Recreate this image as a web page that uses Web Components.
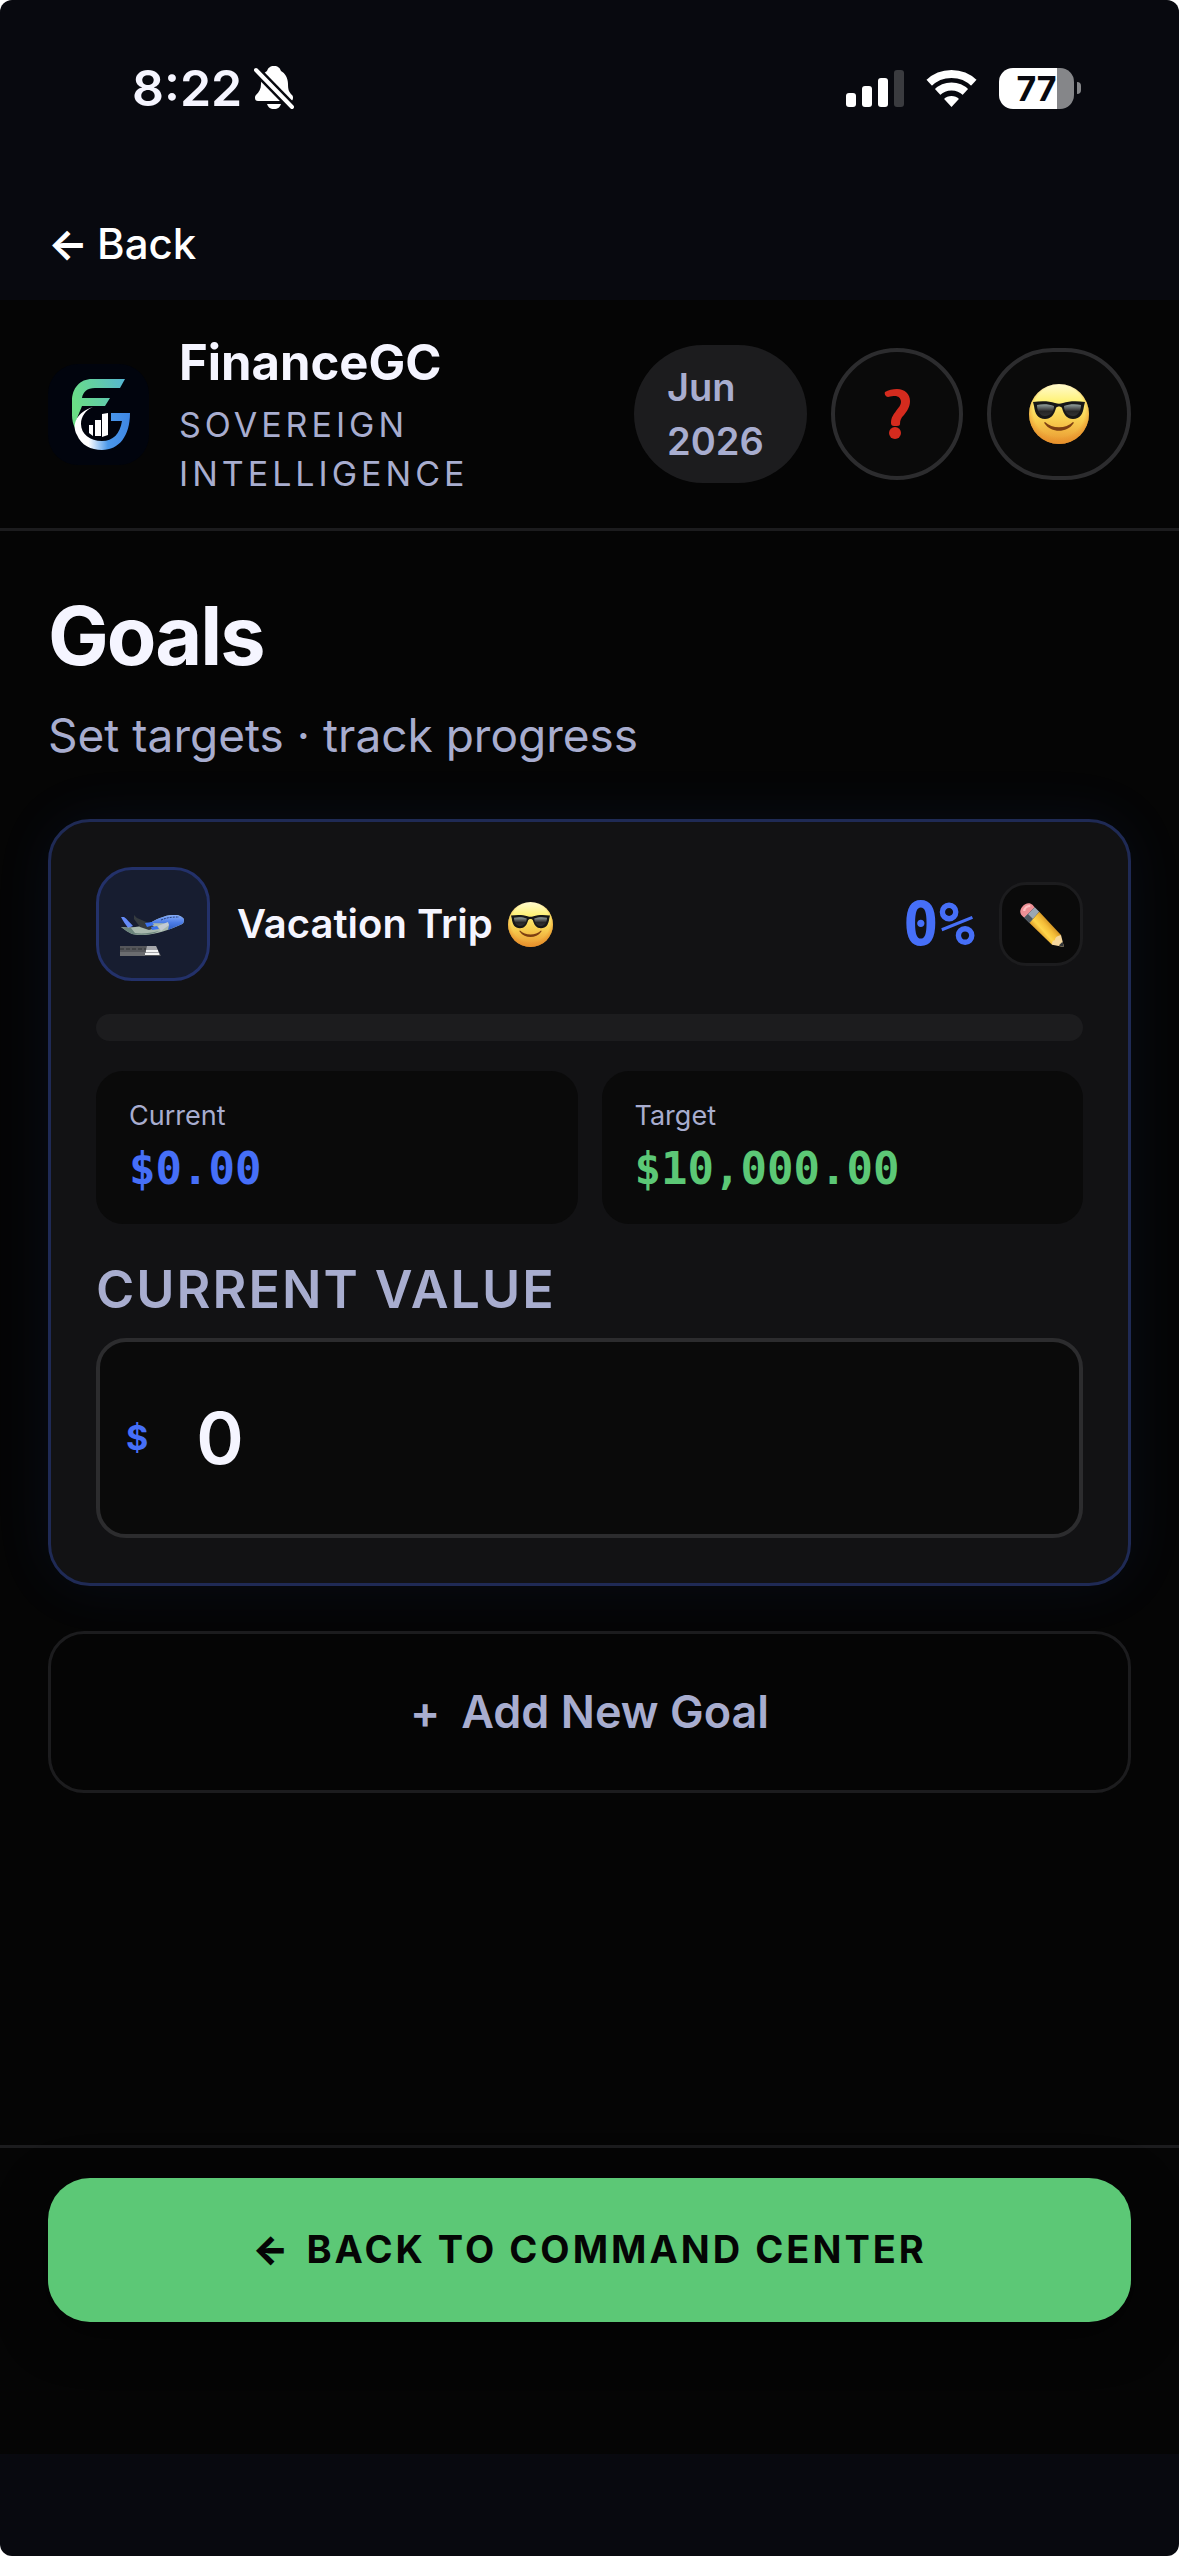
<!DOCTYPE html>
<html lang="en">
<head>
<meta charset="utf-8">
<meta name="viewport" content="width=device-width, initial-scale=1">
<title>FinanceGC - Goals</title>
<style>
  :root {
    --chrome: #08090f;
    --bg: #050505;
    --card: #121214;
    --well: #0a0a0a;
    --line: #1c1c1e;
    --line-strong: #2c2c2e;
    --text: #f5f5ff;
    --muted: #a8adcf;
    --blue: #466ff8;
    --green: #5cc876;
    --mono: "DejaVu Sans Mono", monospace;
  }

  body {
    margin: 0;
    background: #fff;
    color: var(--text);
    font-family: Inter, sans-serif;
  }
</style>
</head>
<body>
<goals-app></goals-app>

<script>
/**
 * Small helper: open shadow root filled from a template
 */
function mount(host, html) {
  const template = document.createElement('template');
  template.innerHTML = html;
  host.attachShadow({ mode: 'open' }).appendChild(template.content.cloneNode(true));
}

/**
 * Emoji drawings
 */
const EMOJI = {
  cool: {
    label: 'Smiling face with sunglasses',
    svg: `
      <svg viewBox="0 0 60 60">
        <defs>
          <linearGradient id="skin" x1="0" y1="0" x2="0" y2="1">
            <stop offset="0" stop-color="#fffbd0"/>
            <stop offset=".28" stop-color="#fff27a"/>
            <stop offset=".6" stop-color="#f8cf50"/>
            <stop offset="1" stop-color="#e9942f"/>
          </linearGradient>
          <radialGradient id="rim" cx=".5" cy=".45" r=".55">
            <stop offset=".78" stop-color="#e8912c" stop-opacity="0"/>
            <stop offset="1" stop-color="#e8912c" stop-opacity=".85"/>
          </radialGradient>
          <linearGradient id="lens" x1="0" y1="0" x2="0" y2="1">
            <stop offset="0" stop-color="#93a09c"/>
            <stop offset=".4" stop-color="#4c4f4f"/>
            <stop offset=".6" stop-color="#262626"/>
            <stop offset="1" stop-color="#333"/>
          </linearGradient>
        </defs>
        <circle cx="30" cy="30" r="30" fill="url(#skin)"/>
        <circle cx="30" cy="30" r="30" fill="url(#rim)"/>
        <path d="M4 18c8-1 16-1 22 1 3 1 5 1 8 0 6-2 14-2 22-1l-1 4c-1 8-4 13-11 13-6 0-9-4-11-11-1-2-5-2-6 0-2 7-5 11-11 11-7 0-10-5-11-13z" fill="#171717"/>
        <path d="M8 21c5-1 12-1 17 1 0 6-4 10-9 10s-8-5-8-11zM52 21c-5-1-12-1-17 1 0 6 4 10 9 10s8-5 8-11z" fill="url(#lens)"/>
        <path d="M16 38c7 7 21 7 28 0 1 0 1 1 0 2-6 9-22 9-28 0-1-1-1-2 0-2z" fill="#7d3f12"/>
      </svg>`
  },
  question: {
    label: 'Question mark',
    svg: `
      <svg viewBox="0 0 60 60">
        <path d="M18 8C21 6 26 5 30 5c8 0 13 5 13 12 0 6-3 10-6 14-3 3-4 5-4 9 0 1-1 2-3 2h-3c-2 0-3-1-3-3 0-6 3-9 5-12 3-4 5-6 5-9 0-4-3-6-6-6-2 0-4 0-7 1-2 0-4-3-3-5z" fill="#d52b1e"/>
        <circle cx="28" cy="49" r="6" fill="#d52b1e"/>
      </svg>`
  },
  pencil: {
    label: 'Pencil',
    svg: `
      <svg viewBox="0 0 60 60">
        <defs>
          <linearGradient id="wood" gradientUnits="userSpaceOnUse" x1="22" y1="36" x2="38" y2="22">
            <stop offset="0" stop-color="#e0a02c"/>
            <stop offset=".3" stop-color="#ffd64b"/>
            <stop offset=".65" stop-color="#f4bd38"/>
            <stop offset="1" stop-color="#cf8f22"/>
          </linearGradient>
        </defs>
        <path d="M2 15C0 9 8 0 15 2c3 1 4 3 6 5L7 21c-2-2-4-3-5-6z" fill="#ee9096"/>
        <path d="M7 12C7 8 11 5 15 5" fill="none" stroke="#ffc0c2" stroke-width="3"/>
        <path d="M7 21 21 7l6 6-13 15z" fill="#9aa7b4"/>
        <path d="M7 21l5-5 7 7-5 5z" fill="#4e5760"/>
        <path d="M14 28 27 13l29 31-12 13z" fill="url(#wood)"/>
        <path d="M44 57c0-4 1-6 4-6 0-4 2-5 8-7l4 16z" fill="#f6d79d"/>
        <path d="M53 58l5-5 2 7z" fill="#33363a"/>
      </svg>`
  },
  plane: {
    label: 'Airplane departure',
    svg: `
      <svg viewBox="0 0 66 42">
        <defs>
          <linearGradient id="hull" x1="0" y1="0" x2="0" y2="1">
            <stop offset="0" stop-color="#86adfb"/>
            <stop offset=".5" stop-color="#4d7de6"/>
            <stop offset="1" stop-color="#2f5ec4"/>
          </linearGradient>
        </defs>
        <path d="M0 32h36l5 10H0z" fill="#55565a"/>
        <path d="M0 38h25v4H0z" fill="#6b6c6f"/>
        <path d="M0 35h26" stroke="#2f3033" stroke-width="1" stroke-dasharray="4 2"/>
        <path d="M27 32h9l4 9H25z" fill="#a5a6aa"/>
        <path d="M26 37h12M25 40h14" stroke="#f4f4f4" stroke-width="2"/>
        <path d="M1 3h3c3 2 6 6 9 9l-5 2c-2-3-5-7-7-11z" fill="#648af7"/>
        <path d="M1 13c8 1 15 0 21-1l8-3c5-3 9-5 13-6 5-2 9-2 13-2 3 0 5 1 8 4 0 4-1 5-4 6-10 5-24 9-35 10-6 0-10 0-13-1-4-2-7-4-11-7z" fill="#a9b9ae"/>
        <path d="M1 13c4 1 7 1 10 1l4 5c8 1 15 0 24-2-4 3-18 5-27 3-4-2-7-4-11-7z" fill="#6c857c"/>
        <path d="M30 9c5-3 9-5 13-6 5-2 9-2 13-2 3 0 5 1 8 4 0 4-1 5-4 6l-12 5 1-5c-5-3-12-1-19-2z" fill="url(#hull)"/>
        <path d="M41 6c7-3 13-3 18-3" fill="none" stroke="#29427e" stroke-width="1" stroke-dasharray="2 1"/>
        <path d="M14 1l3 3 14 6 4 4-6 2-9-3-6-8z" fill="#353b3f"/>
        <path d="M25 9l7-1 2 3-7 2zM31 13l6-1 2 3-7 1z" fill="#3b72ee"/>
        <path d="M38 12l10-4 1 3-8 6z" fill="#c3cbd2"/>
      </svg>`
  }
};

class AppEmoji extends HTMLElement {
  connectedCallback() {
    if (this.shadowRoot) return;
    const item = EMOJI[this.getAttribute('name')];
    mount(this, `
      <style>
        :host { display: inline-block; width: 60px; }
        svg { display: block; width: 100%; height: auto; }
      </style>
      ${item.svg}
    `);
    this.shadowRoot.querySelector('svg').setAttribute('role', 'img');
    this.shadowRoot.querySelector('svg').setAttribute('aria-label', item.label);
  }
}

/**
 * Phone status bar
 */
class StatusBar extends HTMLElement {
  constructor() {
    super();
    mount(this, `
      <style>
        :host {
          display: flex;
          align-items: center;
          justify-content: space-between;
          height: 176px;
          padding: 0 98px 0 132px;
        }
        .group { display: flex; align-items: center; }
        .time { font-size: 50px; font-weight: 600; margin-right: 12px; }
        .right { gap: 22px; }
        svg { display: block; }
        .battery { display: flex; align-items: center; gap: 3px; }
        .cell {
          width: 75px;
          line-height: 41px;
          border-radius: 14px;
          background: linear-gradient(90deg, #fff 58px, #858689 58px);
          color: var(--chrome);
          font-size: 34px;
          font-weight: 700;
          text-align: center;
        }
        .nub {
          width: 4px;
          height: 12px;
          border-radius: 0 4px 4px 0;
          background: #858689;
        }
      </style>
      <div class="group">
        <span class="time">8:22</span>
        <svg width="40" height="44" viewBox="0 0 40 44" role="img" aria-label="Silent">
          <path d="M20 0c4 0 6 2 7 5 4 2 7 7 7 13 0 6 1 8 4 11 1 1 1 2 1 3 0 2-1 3-3 3H4c-2 0-3-1-3-3 0-1 0-2 1-3 3-3 5-6 5-11 0-6 2-11 6-13 1-3 3-5 7-5z" fill="#fff"/>
          <path d="M13 38h14c-1 3-3 5-7 5s-6-2-7-5z" fill="#fff"/>
          <path d="M0 2l40 41" stroke="#08090f" stroke-width="9"/>
          <path d="M2 4l36 37" stroke="#fff" stroke-width="4" stroke-linecap="round"/>
        </svg>
      </div>
      <div class="group right">
        <svg width="58" height="37" viewBox="0 0 58 37" role="img" aria-label="Signal">
          <rect y="23" width="10" height="14" rx="3" fill="#fff"/>
          <rect x="16" y="16" width="10" height="21" rx="3" fill="#fff"/>
          <rect x="32" y="8" width="10" height="29" rx="3" fill="#fff"/>
          <rect x="48" width="10" height="37" rx="3" fill="#3a3b3f"/>
        </svg>
        <svg width="51" height="37" viewBox="0 0 51 37" role="img" aria-label="Wi-Fi">
          <clipPath id="wedge"><path d="M25.500 37L-4 5V-5H55V5z"/></clipPath>
          <g clip-path="url(#wedge)" fill="none" stroke="#fff" stroke-width="8">
            <circle cx="25.500" cy="37" r="33"/>
            <circle cx="25.500" cy="37" r="20.500"/>
            <circle cx="25.500" cy="37" r="11" fill="#fff" stroke="none"/>
          </g>
        </svg>
        <div class="battery"><span class="cell">77</span><span class="nub"></span></div>
      </div>
    `);
  }
}

/**
 * App header: logo, name, month pill and the round buttons
 */
class AppHeader extends HTMLElement {
  constructor() {
    super();
    mount(this, `
      <style>
        :host {
          display: flex;
          align-items: center;
          gap: 24px;
          padding: 30px 48px;
          border-bottom: 3px solid var(--line);
        }
        .logo { flex: none; display: block; border-radius: 30px; }
        .brand { flex: 1; padding-left: 6px; }
        .name { font-size: 49px; line-height: 66px; font-weight: 700; }
        .tag {
          margin-top: 4px;
          color: var(--muted);
          font-size: 34px;
          line-height: 49px;
          letter-spacing: 4px;
        }
        .month {
          box-sizing: border-box;
          width: 173px;
          padding: 15px 33px;
          border-radius: 69px;
          background: var(--line);
          color: var(--muted);
          font-size: 38px;
          line-height: 54px;
          font-weight: 600;
        }
        button {
          box-sizing: border-box;
          display: flex;
          align-items: center;
          justify-content: center;
          height: 132px;
          padding: 0 38px;
          border: 4px solid var(--line-strong);
          border-radius: 66px;
          background: var(--well);
        }
        .help { padding: 0 32px; }
      </style>
      <svg class="logo" width="101" height="101" viewBox="0 0 101 101" role="img" aria-label="FinanceGC logo">
        <defs>
          <linearGradient id="f" x1="0" y1=".4" x2="1" y2="0">
            <stop offset="0" stop-color="#6ade85"/>
            <stop offset=".5" stop-color="#62cda6"/>
            <stop offset="1" stop-color="#55b5d4"/>
          </linearGradient>
          <linearGradient id="g" x1="0" y1="0" x2="1" y2="0">
            <stop offset=".25" stop-color="#fff"/>
            <stop offset=".6" stop-color="#4b98ea"/>
            <stop offset="1" stop-color="#3e86e4"/>
          </linearGradient>
        </defs>
        <rect width="101" height="101" fill="#01040d"/>
        <path d="M77 15l-5 9H47c-8 0-12 4-13 10h28l-5 8H34c-2 6-6 12-7 22-2-4-3-8-3-13V37c0-13 8-22 20-22z" fill="url(#f)"/>
        <path d="M45 43C29 48 23 60 29 71c4 10 14 15 25 15 17 0 28-14 28-37H63v8h11c-2 13-9 20-20 20-12 0-21-7-21-17 0-8 5-14 12-17z" fill="url(#g)"/>
        <path d="M41 61h4v11l-4-3zM47 56h6v16h-6zM54 50l6-1v22l-6 2z" fill="#fff"/>
      </svg>
      <div class="brand">
        <div class="name">FinanceGC</div>
        <div class="tag">SOVEREIGN INTELLIGENCE</div>
      </div>
      <div class="month">Jun 2026</div>
      <button class="help" type="button" aria-label="Help"><app-emoji name="question"></app-emoji></button>
      <button type="button" aria-label="Profile"><app-emoji name="cool"></app-emoji></button>
    `);
  }
}

/**
 * Label and amount tile
 */
class StatTile extends HTMLElement {
  constructor() {
    super();
    mount(this, `
      <style>
        :host {
          display: block;
          padding: 24px 33px;
          border-radius: 27px;
          background: var(--well);
        }
        .label { color: var(--muted); font-size: 27px; line-height: 42px; }
        .value { font: 700 44px/63px var(--mono); color: var(--tone, var(--blue)); }
      </style>
      <div class="label"><slot name="label"></slot></div>
      <div class="value"><slot></slot></div>
    `);
  }
}

/**
 * Goal card
 */
class GoalCard extends HTMLElement {
  constructor() {
    super();
    mount(this, `
      <style>
        :host {
          display: block;
          padding: 45px;
          border: 3px solid #1f2a55;
          border-radius: 42px;
          background: var(--card);
          box-shadow: 0 0 60px rgba(70, 111, 248, .08);
        }
        .top { display: flex; align-items: center; }
        .icon {
          box-sizing: border-box;
          display: flex;
          align-items: center;
          justify-content: center;
          width: 114px;
          height: 114px;
          padding-top: 21px;
          border: 3px solid #23316a;
          border-radius: 36px;
          background: #171d30;
        }
        .icon app-emoji { width: 66px; }
        h2 {
          display: flex;
          align-items: center;
          gap: 15px;
          flex: 1;
          margin: 0 0 0 27px;
          font-size: 40px;
          line-height: 54px;
          font-weight: 600;
        }
        h2 app-emoji { width: 45px; }
        .percent { color: var(--blue); font: 700 60px/72px var(--mono); }
        .edit {
          box-sizing: border-box;
          display: flex;
          align-items: center;
          justify-content: center;
          width: 84px;
          height: 84px;
          margin-left: 24px;
          padding: 0;
          border: 3px solid var(--line);
          border-radius: 27px;
          background: var(--well);
        }
        .edit app-emoji { width: 45px; }
        .bar {
          height: 27px;
          margin: 33px 0 30px;
          border-radius: 14px;
          background: var(--line);
        }
        .stats { display: grid; grid-template-columns: 1fr 1fr; gap: 24px; }
        .goal { --tone: var(--green); }
        label {
          display: block;
          margin: 27px 0 9px;
          color: var(--muted);
          font-size: 52px;
          line-height: 78px;
          font-weight: 600;
          letter-spacing: 2px;
        }
        .field {
          box-sizing: border-box;
          display: flex;
          align-items: center;
          height: 200px;
          padding: 0 26px;
          border: 4px solid var(--line-strong);
          border-radius: 30px;
          background: var(--well);
        }
        .field span { color: var(--blue); font: 700 34px/48px Inter, sans-serif; }
        input {
          flex: 1;
          min-width: 0;
          margin-left: 48px;
          padding: 0;
          border: 0;
          outline: 0;
          background: none;
          color: var(--text);
          font: 600 72px/96px Inter, sans-serif;
        }
      </style>
      <div class="top">
        <div class="icon"><app-emoji name="plane"></app-emoji></div>
        <h2><slot name="title"></slot><app-emoji name="cool"></app-emoji></h2>
        <span class="percent">0%</span>
        <button class="edit" type="button" aria-label="Edit goal"><app-emoji name="pencil"></app-emoji></button>
      </div>
      <div class="bar" role="progressbar" aria-valuenow="0" aria-valuemin="0" aria-valuemax="100"></div>
      <div class="stats">
        <stat-tile><span slot="label">Current</span>$0.00</stat-tile>
        <stat-tile class="goal"><span slot="label">Target</span>$10,000.00</stat-tile>
      </div>
      <label for="value">CURRENT VALUE</label>
      <div class="field">
        <span>$</span>
        <input id="value" type="text" inputmode="decimal" value="0">
      </div>
    `);
  }
}

/**
 * Page
 */
class GoalsApp extends HTMLElement {
  constructor() {
    super();
    mount(this, `
      <style>
        :host {
          display: flex;
          flex-direction: column;
          min-height: 100vh;
          border-radius: 12px;
          overflow: hidden;
          background: var(--chrome);
        }
        nav { height: 124px; display: flex; align-items: center; padding: 12px 48px 0; box-sizing: border-box; }
        nav a {
          display: flex;
          align-items: center;
          gap: 9px;
          color: #fff;
          font-size: 42px;
          line-height: 60px;
          font-weight: 500;
          text-decoration: none;
        }
        nav .arrow { font-weight: 700; }
        .screen { flex: 1; display: flex; flex-direction: column; background: var(--bg); }
        main { flex: 1; padding: 54px 48px 0; }
        h1 { margin: 0; font-size: 81px; line-height: 102px; font-weight: 700; letter-spacing: -2px; }
        .sub { margin: 12px 0 48px; color: var(--muted); font-size: 46px; line-height: 72px; }
        .add {
          display: flex;
          align-items: center;
          justify-content: center;
          gap: 21px;
          box-sizing: border-box;
          width: 100%;
          height: 162px;
          margin-top: 45px;
          border: 3px solid var(--line);
          border-radius: 36px;
          background: none;
          color: var(--muted);
          font: 600 45px/60px Inter, sans-serif;
        }
        footer { padding: 30px 48px 132px; border-top: 3px solid var(--line); }
        .back {
          display: flex;
          align-items: center;
          justify-content: center;
          gap: 15px;
          width: 100%;
          height: 144px;
          padding: 0 0 3px;
          border: 0;
          border-radius: 42px;
          background: var(--green);
          box-shadow: 0 12px 48px rgba(0, 0, 0, .5);
          color: var(--bg);
          font: 700 38px/54px Inter, sans-serif;
          letter-spacing: 3px;
        }
        .back .arrow { font-weight: 900; }
        .home { height: 102px; }
      </style>
      <status-bar></status-bar>
      <nav><a href="#"><span class="arrow">←</span><span>Back</span></a></nav>
      <div class="screen">
        <app-header></app-header>
        <main>
          <h1>Goals</h1>
          <p class="sub">Set targets · track progress</p>
          <goal-card><span slot="title">Vacation Trip</span></goal-card>
          <button class="add" type="button"><span>+</span><span>Add New Goal</span></button>
        </main>
        <footer>
          <button class="back" type="button"><span class="arrow">←</span><span>BACK TO COMMAND CENTER</span></button>
        </footer>
      </div>
      <div class="home"></div>
    `);
  }
}

customElements.define('app-emoji', AppEmoji);
customElements.define('status-bar', StatusBar);
customElements.define('app-header', AppHeader);
customElements.define('stat-tile', StatTile);
customElements.define('goal-card', GoalCard);
customElements.define('goals-app', GoalsApp);
</script>
</body>
</html>
